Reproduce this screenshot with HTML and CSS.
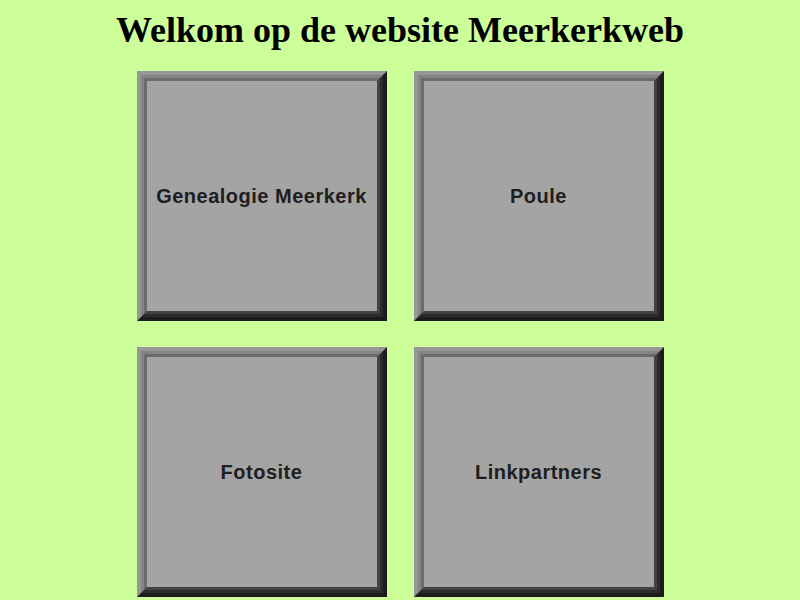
FILE: index.html
```html
<!DOCTYPE html>
<html lang="nl">
<head>
<meta charset="utf-8">
<title>Meerkerkweb</title>
<link rel="stylesheet" href="styles.css">
</head>
<body>
<h1 class="title">Welkom op de website Meerkerkweb</h1>
<nav class="tiles">
  <a class="tile" href="#"><span class="tile-rim"><span class="tile-face">Genealogie Meerkerk</span></span></a>
  <a class="tile" href="#"><span class="tile-rim"><span class="tile-face">Poule</span></span></a>
  <a class="tile" href="#"><span class="tile-rim"><span class="tile-face">Fotosite</span></span></a>
  <a class="tile" href="#"><span class="tile-rim"><span class="tile-face">Linkpartners</span></span></a>
</nav>
</body>
</html>
```
FILE: styles.css
```css
html, body {
  margin: 0;
  padding: 0;
  overflow: hidden;
}

body {
  background: #ccff99;
  font-family: "Liberation Serif", "Times New Roman", serif;
}

.title {
  margin: 10px 0 0;
  font-size: 36px;
  font-weight: bold;
  text-align: center;
  color: #000;
  line-height: 40px;
}

.tiles {
  display: grid;
  grid-template-columns: 250px 250px;
  column-gap: 27px;
  row-gap: 26px;
  justify-content: center;
  margin-top: 21px;
}

/* bevelled button: three stacked borders give the shaded edge */
.tile {
  display: block;
  width: 250px;
  height: 250px;
  box-sizing: border-box;
  border: 4px solid;
  border-color: #969696 #1c1c1c #1c1c1c #969696;
  text-decoration: none;
}

.tile-rim {
  display: block;
  height: 100%;
  box-sizing: border-box;
  border: 3px solid;
  border-color: #848484 #2b2b2b #2b2b2b #848484;
}

.tile-face {
  display: flex;
  align-items: center;
  justify-content: center;
  height: 100%;
  box-sizing: border-box;
  border: 3px solid;
  border-color: #6b6b6b #434343 #434343 #6b6b6b;
  background: #a4a4a4;
  font-family: "Liberation Sans", Arial, sans-serif;
  font-size: 20px;
  font-weight: bold;
  letter-spacing: 0.5px;
  color: #1e1e1e;
}
```
